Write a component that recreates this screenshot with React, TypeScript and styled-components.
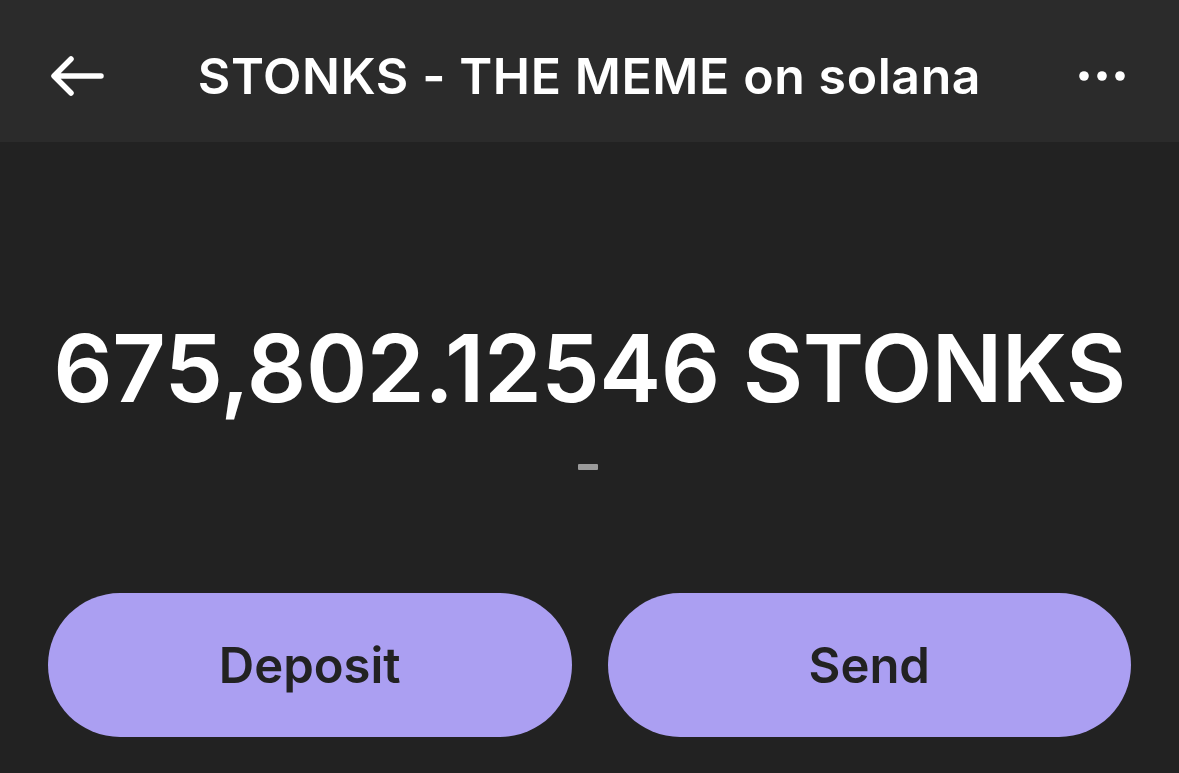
import React from 'react';
import styled, { createGlobalStyle } from 'styled-components';

const GlobalStyle = createGlobalStyle`
  html, body {
    margin: 0;
    padding: 0;
    background: #222222;
  }
  body {
    font-family: Inter, "Noto Sans", sans-serif;
    -webkit-font-smoothing: antialiased;
  }
`;

const Screen = styled.div`
  width: 1179px;
  height: 773px;
  display: flex;
  flex-direction: column;
  background: #222222;
  overflow: hidden;
`;

const Header = styled.header`
  height: 142px;
  box-sizing: border-box;
  padding-top: 10px;
  flex-shrink: 0;
  display: grid;
  grid-template-columns: 150px 1fr 150px;
  align-items: center;
  background: #2b2b2b;
`;

const IconButton = styled.button<{ align?: 'start' | 'end' }>`
  display: flex;
  justify-content: ${({ align }) => (align === 'end' ? 'flex-end' : 'flex-start')};
  align-items: center;
  background: none;
  border: 0;
  padding: ${({ align }) => (align === 'end' ? '0 54px 0 0' : '0 0 0 50px')};
  height: 100%;
  cursor: pointer;
`;

const Title = styled.h1`
  margin: 0;
  text-align: center;
  color: #ffffff;
  font-size: 50px;
  font-weight: 600;
  letter-spacing: 0.6px;
  white-space: nowrap;
`;

const Balance = styled.section`
  display: flex;
  flex-direction: column;
  align-items: center;
  padding-top: 178px;
`;

const Amount = styled.div`
  color: #ffffff;
  font-size: 93px;
  font-weight: 600;
  line-height: 96px;
  letter-spacing: -0.5px;
  white-space: nowrap;
`;

const Fiat = styled.div`
  margin-top: 48px;
  margin-right: 3px;
  width: 20px;
  height: 6px;
  background: #9a9a9a;
  border-radius: 1px;
`;

const Actions = styled.div`
  margin-top: auto;
  padding: 0 48px 36px;
  display: grid;
  grid-template-columns: 1fr 1fr;
  gap: 36px;
`;

const ActionButton = styled.button`
  height: 144px;
  border: 0;
  border-radius: 72px;
  background: #ab9ff2;
  color: #222222;
  font-family: Inter, "Noto Sans", sans-serif;
  font-size: 49px;
  font-weight: 600;
  cursor: pointer;
`;

const BackArrow = () => (
  <svg width="56" height="44" viewBox="0 0 56 44" fill="none">
    <path
      d="M51 22H5M21 5L4 22l17 17"
      stroke="#fff"
      strokeWidth="5.5"
      strokeLinecap="round"
      strokeLinejoin="round"
    />
  </svg>
);

const MoreDots = () => (
  <svg width="46" height="12" viewBox="0 0 46 12">
    <circle cx="5" cy="6" r="4.8" fill="#fff" />
    <circle cx="23" cy="6" r="4.8" fill="#fff" />
    <circle cx="41" cy="6" r="4.8" fill="#fff" />
  </svg>
);

export default function App() {
  return (
    <Screen>
      <GlobalStyle />
      <Header>
        <IconButton aria-label="Back">
          <BackArrow />
        </IconButton>
        <Title>STONKS - THE MEME on solana</Title>
        <IconButton align="end" aria-label="More">
          <MoreDots />
        </IconButton>
      </Header>
      <Balance>
        <Amount>675,802.12546 STONKS</Amount>
        <Fiat />
      </Balance>
      <Actions>
        <ActionButton>Deposit</ActionButton>
        <ActionButton>Send</ActionButton>
      </Actions>
    </Screen>
  );
}
